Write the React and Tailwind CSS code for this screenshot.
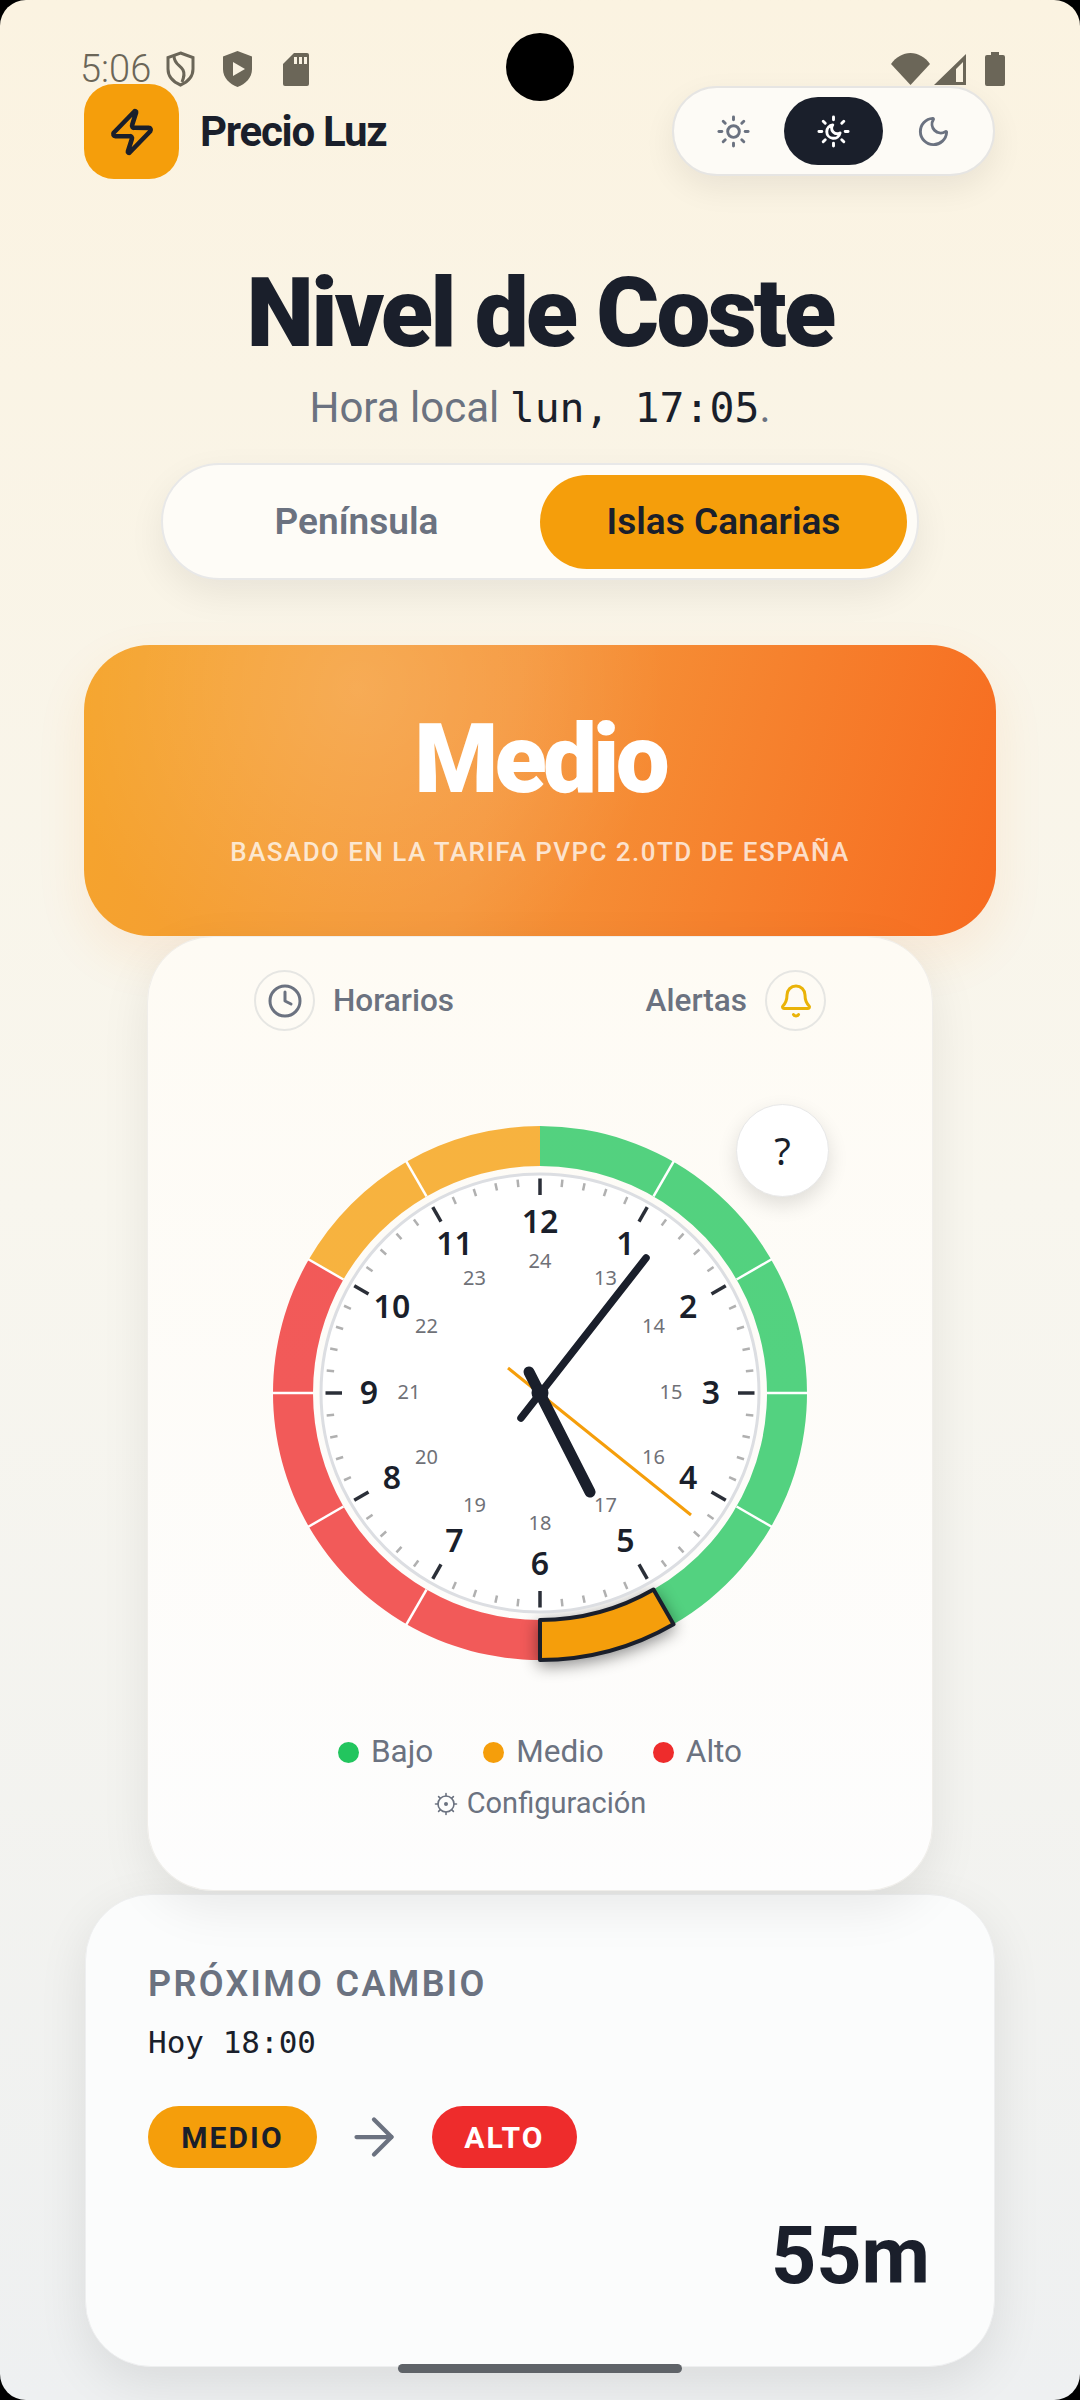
import React from 'react'
import { Zap, Sun, Moon, Clock, Bell, ArrowRight } from 'lucide-react'

const polar = (r, deg) => {
  const a = ((deg - 90) * Math.PI) / 180
  return [300 + r * Math.cos(a), 300 + r * Math.sin(a)]
}

const sectorPath = (from, to, r1 = 267, r2 = 227) => {
  const [ax, ay] = polar(r1, from)
  const [bx, by] = polar(r1, to)
  const [cx, cy] = polar(r2, to)
  const [dx, dy] = polar(r2, from)
  return `M${ax} ${ay}A${r1} ${r1} 0 0 1 ${bx} ${by}L${cx} ${cy}A${r2} ${r2} 0 0 0 ${dx} ${dy}Z`
}

const sectors = [
  [0, 150, '#22c55e'],
  [180, 300, '#ee2c2c'],
  [300, 360, '#f59e0b'],
]
const separators = [30, 60, 90, 120, 210, 240, 270, 300, 330]
const hours = [12, 1, 2, 3, 4, 5, 6, 7, 8, 9, 10, 11]

const ClockFace = () => (
  <svg viewBox="0 0 600 600" className="w-[600px] h-[600px] overflow-visible">
    {sectors.map(([a, b, c]) => (
      <path key={a} d={sectorPath(a, b)} fill={c} opacity="0.78" />
    ))}
    {separators.map(deg => {
      const [x1, y1] = polar(227, deg)
      const [x2, y2] = polar(268, deg)
      return <line key={deg} x1={x1} y1={y1} x2={x2} y2={y2} stroke="#ffffff" strokeWidth="2.5" />
    })}
    <path
      d={sectorPath(150, 180)}
      fill="#f59e0b"
      stroke="#1a1f2b"
      strokeWidth="4"
      strokeLinejoin="round"
      className="drop-shadow-[0_4px_8px_rgba(0,0,0,0.45)]"
    />
    <circle cx="300" cy="300" r="219" fill="#ffffff" stroke="#dcdee2" strokeWidth="3" />
    {Array.from({ length: 60 }).map((_, i) => {
      const major = i % 5 === 0
      const [x1, y1] = polar(major ? 198 : 207, i * 6)
      const [x2, y2] = polar(214.5, i * 6)
      return (
        <line
          key={i}
          x1={x1}
          y1={y1}
          x2={x2}
          y2={y2}
          stroke={major ? '#2b2f38' : '#b0b0b0'}
          strokeWidth={major ? 3.5 : 2.5}
        />
      )
    })}
    {hours.map((h, i) => {
      const [x, y] = polar(171, i * 30)
      const [x2, y2] = polar(131, i * 30)
      return (
        <g key={h} className="font-['Noto_Sans',sans-serif]" textAnchor="middle" dominantBaseline="central">
          <text x={x} y={y - 2} fontSize="32" fontWeight="600" fill="#1a1f2b">{h}</text>
          <text x={x2} y={y2 - 2} fontSize="20" fill="#6f7177">{h + 12}</text>
        </g>
      )
    })}
    <line x1="281" y1="325" x2="406" y2="165" stroke="#1a1f2b" strokeWidth="7.5" strokeLinecap="round" />
    <line x1="268" y1="275" x2="451" y2="422" stroke="#f59e0b" strokeWidth="3" />
    <line x1="289" y1="279" x2="350" y2="399" stroke="#1a1f2b" strokeWidth="11" strokeLinecap="round" />
    <circle cx="300" cy="300" r="8.5" fill="#1a1f2b" />
  </svg>
)

const StatusBar = () => (
  <div className="absolute left-[80px] right-[75px] top-[51px] h-[36px] flex items-center justify-between text-[#6b6658]">
    <div className="flex items-center">
      <span className="text-[38px] leading-[36px] font-light font-['Roboto',sans-serif]">5:06</span>
      <svg viewBox="0 0 29 36" className="w-[29px] h-[36px] ml-[15px]" fill="none" stroke="currentColor" strokeWidth="3">
        <path d="M14.5 2 27 6.5V18c0 8-5.500 13-12.500 16C7.500 31 2 26 2 18V6.500Z" />
        <path d="M8 5c0 8 6 9 9 14 2 4 1 7-1 12" />
      </svg>
      <svg viewBox="0 0 29 36" className="w-[29px] h-[36px] ml-[28px]" fill="currentColor">
        <path d="M14.500 0 29 5.500V18c0 9-6.500 15-14.500 18C6.500 33 0 27 0 18V5.500Z" />
        <path d="M10 11v14l12-7Z" fill="#f9f2e2" />
      </svg>
      <svg viewBox="0 0 26 33" className="w-[26px] h-[33px] ml-[31px]" fill="currentColor">
        <path d="M11 0h13a2 2 0 0 1 2 2v29a2 2 0 0 1-2 2H2a2 2 0 0 1-2-2V11Z" />
        <path d="M11 4h3v7h-3ZM16 4h3v7h-3ZM21 4h3v7h-3Z" fill="#f9f2e2" />
      </svg>
    </div>
    <div className="flex items-center">
      <svg viewBox="0 0 39 32" className="w-[39px] h-[32px]" fill="currentColor">
        <path d="M0 11C5 4 12 0 19.500 0S34 4 39 11L19.500 32Z" />
      </svg>
      <svg viewBox="0 0 32 31" className="w-[32px] h-[31px] ml-[4px]" fill="currentColor">
        <path d="M32 0v31H0ZM29 8 22 15v13h7Z" fillRule="evenodd" />
      </svg>
      <svg viewBox="0 0 20 34" className="w-[20px] h-[34px] ml-[19px]" fill="currentColor">
        <path d="M6 0h8v3h4a2 2 0 0 1 2 2v27a2 2 0 0 1-2 2H2a2 2 0 0 1-2-2V5a2 2 0 0 1 2-2h4Z" />
      </svg>
    </div>
  </div>
)

// sun rays around a small crescent, the "auto" theme
const AutoTheme = () => (
  <svg viewBox="0 0 24 24" className="w-[35px] h-[35px]" fill="none" stroke="currentColor" strokeWidth="2" strokeLinecap="round" strokeLinejoin="round">
    <path d="M12 2v2M12 20v2M4.930 4.930l1.410 1.410M17.660 17.660l1.410 1.410M2 12h2M20 12h2M6.340 17.660l-1.410 1.410M19.070 4.930l-1.410 1.410" />
    <path d="M11.500 7.500a4.600 4.600 0 1 0 5 5.500 3.800 3.800 0 0 1-5-5.500Z" />
  </svg>
)

const GearDot = () => (
  <svg viewBox="0 0 24 24" className="w-[24px] h-[24px]" fill="none" stroke="#6b7280" strokeWidth="1.600" strokeLinecap="round">
    <circle cx="12" cy="12" r="8" />
    <circle cx="12" cy="12" r="2" fill="#6b7280" stroke="none" />
    <path d="M12 1.500V4M12 20v2.500M1.500 12H4M20 12h2.500M4.600 4.600l1.700 1.700M17.700 17.700l1.700 1.700M19.400 4.600l-1.700 1.700M6.300 17.700l-1.700 1.700" />
  </svg>
)

const App = () => {
  return (
    <div className="bg-black w-[1080px] h-[2400px]">
      <div className="relative w-[1080px] h-[2400px] overflow-hidden rounded-[26px] bg-gradient-to-b from-[#fbf3e1] via-[#f8f6ee] to-[#eef0f1] font-['Roboto',sans-serif] px-[84px] pt-[84px]">
        {/* Header */}
        <div className="flex items-start justify-between">
          <div className="flex items-center gap-[21px]">
            <div className="w-[95px] h-[95px] rounded-[30px] bg-[#f59e0b] flex items-center justify-center text-[#1a1f2b]">
              <Zap size={50} strokeWidth={2.2} />
            </div>
            <span className="text-[42px] leading-[48px] font-bold tracking-[-0.03em] text-[#1a1f2b]">Precio Luz</span>
          </div>
          <div className="mt-[2px] mr-[1px] w-[323px] h-[90px] rounded-full border-2 border-[#e6e5e3] bg-[#fdfbf6] shadow-[0_12px_32px_rgba(0,0,0,0.07)] flex items-center px-[10px] text-[#6b7280]">
            <div className="w-[100px] flex justify-center"><Sun size={35} strokeWidth={2} /></div>
            <div className="w-[100px] h-[68px] rounded-full bg-[#1a1f2b] flex items-center justify-center text-white"><AutoTheme /></div>
            <div className="w-[100px] flex justify-center"><Moon size={35} strokeWidth={2} /></div>
          </div>
        </div>

        {/* Title */}
        <h1 className="mt-[84px] text-center text-[96px] leading-[100px] font-black tracking-[-0.03em] text-[#1a1f2b]">Nivel de Coste</h1>
        <p className="mt-[20px] text-center text-[42px] leading-[50px] font-normal text-[#6b7280]">
          Hora local <span className="text-[41.5px] font-['DejaVu_Sans_Mono',monospace] font-normal text-[#1a1f2b]">lun, 17:05</span>.
        </p>

        {/* Region switch */}
        <div className="mt-[30px] mx-auto w-[758px] h-[117px] rounded-full border-2 border-[#e8e8e8] bg-[#fefcf7] shadow-[0_14px_36px_rgba(0,0,0,0.07)] flex items-center px-[10px] text-[37px] font-semibold">
          <div className="flex-1 text-center text-[#6b7280]">Península</div>
          <div className="w-[367px] h-[94px] rounded-full bg-[#f59e0b] text-[#1a1f2b] flex items-center justify-center">Islas Canarias</div>
        </div>

        {/* Level card */}
        <div className="relative mt-[65px] w-[912px] h-[291px] rounded-[66px] bg-[linear-gradient(105deg,#f5a52c,#f5963a_45%,#f76b20)] overflow-hidden flex flex-col items-center pt-[64px] shadow-[0_20px_50px_rgba(245,130,30,0.10)]">
          <div className="absolute left-0 top-0 w-full h-full bg-[radial-gradient(circle_at_30%_15%,rgba(255,255,255,0.16),transparent_45%)]"></div>
          <div className="relative text-[96px] leading-[100px] font-black tracking-[-0.04em] text-white">Medio</div>
          <div className="relative mt-[25px] text-[26px] leading-[36px] font-medium tracking-[0.055em] text-white/75">BASADO EN LA TARIFA PVPC 2.0TD DE ESPAÑA</div>
        </div>

        {/* Clock card */}
        <div className="relative mx-auto w-[786px] h-[955px] rounded-[66px] bg-gradient-to-b from-[#fefbf4] to-[#fdfdfd] border border-[#f0eeea] shadow-[0_16px_50px_rgba(0,0,0,0.08)] flex flex-col items-center pt-[33px]">
          <div className="w-[572px] h-[61px] flex items-center justify-between text-[31.5px] font-medium text-[#6b7280]">
            <div className="flex items-center gap-[18px]">
              <div className="w-[61px] h-[61px] rounded-full border-2 border-[#e6e6e3] flex items-center justify-center">
                <Clock size={36} strokeWidth={2} />
              </div>
              <span>Horarios</span>
            </div>
            <div className="flex items-center gap-[18px]">
              <span>Alertas</span>
              <div className="w-[61px] h-[61px] rounded-full border-2 border-[#e6e6e3] flex items-center justify-center text-[#eab308]">
                <Bell size={36} strokeWidth={2} />
              </div>
            </div>
          </div>
          <div className="mt-[62px]"><ClockFace /></div>
          <div className="absolute left-[588px] top-[167px] w-[93px] h-[93px] rounded-full bg-white border border-[#e8e8e8] shadow-[0_8px_20px_rgba(0,0,0,0.12)] flex items-center justify-center text-[38px] font-['Noto_Sans',sans-serif] text-[#1a1f2b]">?</div>
          <div className="mt-[37px] h-[44px] flex items-center text-[31.5px] font-normal text-[#6b7280]">
            <span className="w-[21px] h-[21px] rounded-full bg-[#22c55e]"></span>
            <span className="ml-[12px]">Bajo</span>
            <span className="ml-[50px] w-[21px] h-[21px] rounded-full bg-[#f59e0b]"></span>
            <span className="ml-[12px]">Medio</span>
            <span className="ml-[49px] w-[21px] h-[21px] rounded-full bg-[#ee2c2c]"></span>
            <span className="ml-[12px]">Alto</span>
          </div>
          <div className="mt-[9px] h-[42px] flex items-center gap-[9px] text-[29px] font-normal text-[#6b7280]">
            <GearDot />
            <span>Configuración</span>
          </div>
        </div>

        {/* Next change card */}
        <div className="mt-[3px] mx-auto w-[910px] h-[473px] rounded-[66px] bg-[#fbfcfc] border border-[#eeeff0] shadow-[0_16px_50px_rgba(0,0,0,0.09)] flex flex-col px-[62px] pt-[67px]">
          <div className="text-[36px] leading-[44px] font-semibold tracking-[0.065em] text-[#6b7280]">PRÓXIMO CAMBIO</div>
          <div className="mt-[16px] text-[31px] leading-[40px] font-['DejaVu_Sans_Mono',monospace] text-[#1a1f2b]">Hoy 18:00</div>
          <div className="mt-[44px] flex items-center">
            <span className="w-[169px] h-[62px] rounded-full bg-[#f59e0b] text-[#1a1f2b] flex items-center justify-center text-[30px] font-bold tracking-[0.07em]">MEDIO</span>
            <ArrowRight size={60} strokeWidth={1.7} className="ml-[27px] text-[#6b7280]" />
            <span className="ml-[28px] w-[145px] h-[62px] rounded-full bg-[#ee2c2c] text-white flex items-center justify-center text-[30px] font-bold tracking-[0.07em]">ALTO</span>
          </div>
          <div className="mt-[48px] text-right pr-[2px] text-[79px] leading-[80px] font-bold text-[#1a1f2b]">55m</div>
        </div>

        {/* System overlays */}
        <StatusBar />
        <div className="absolute left-[506px] top-[33px] w-[68px] h-[68px] rounded-full bg-black"></div>
        <div className="absolute left-[398px] top-[2364px] w-[284px] h-[9px] rounded-full bg-[#5f6368]"></div>
      </div>
    </div>
  )
}

export default App
